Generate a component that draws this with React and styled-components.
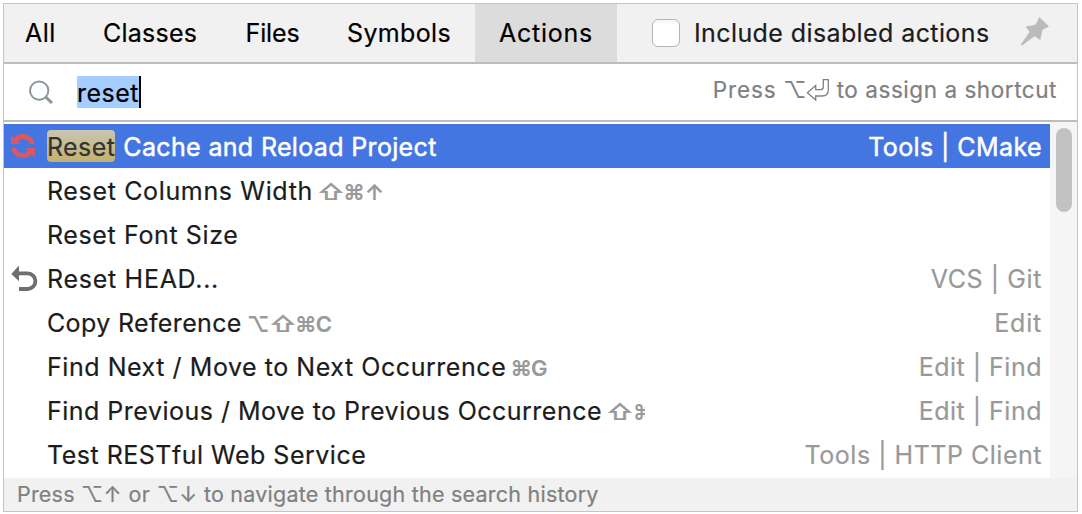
import React from "react";
import styled, { createGlobalStyle } from "styled-components";

const Global = createGlobalStyle`
  * { box-sizing: border-box; }
  body {
    margin: 0;
    background: #fff;
    font-family: "Inter", "Liberation Sans", sans-serif;
    font-size: 25px;
    color: #1c1c1c;
    -webkit-text-stroke-width: 0.2px;
  }
`;

const Popup = styled.div`
  width: 1075px;
  height: 509px;
  margin: 3px 0 0 3px;
  border: 1px solid #c4c4c4;
  display: flex;
  flex-direction: column;
  background: #fff;
  white-space: pre;
`;

const Text = styled.span`
  letter-spacing: ${(p) => p.$track || 0}px;
`;

const Header = styled.div`
  height: 60px;
  flex: none;
  display: flex;
  background: #f1f1f1;
  border-bottom: 2px solid #bdbdbd;
`;

const Tab = styled.div`
  width: ${(p) => p.$width}px;
  padding-left: ${(p) => p.$inset}px;
  line-height: 58px;
  color: #000;
  background: ${(p) => (p.$active ? "#dcdcdc" : "transparent")};
`;

const Option = styled.label`
  display: flex;
  align-items: center;
  margin-left: 35px;
  gap: 14px;
  line-height: 58px;
`;

const Checkbox = styled.span`
  width: 28px;
  height: 28px;
  border: 1px solid #b4b4b4;
  border-radius: 6px;
  background: linear-gradient(#f4f4f4, #fff 18%);
`;

const PinButton = styled.span`
  margin: 12px 0 0 30px;
  line-height: 0;
`;

const SearchBar = styled.div`
  height: 58px;
  flex: none;
  display: flex;
  align-items: center;
  padding: 0 20px 0 24px;
  border-bottom: 2px solid #bdbdbd;
  color: #000;
`;

const Query = styled.span`
  margin-left: 23px;
  height: 32px;
  line-height: 34px;
  width: 64px;
  background: #a5cdff;
  border-right: 2px solid #000;
`;

const Hint = styled.span`
  margin-left: auto;
  display: flex;
  align-items: center;
  padding-bottom: 5px;
  font-size: 22.5px;
  color: #808080;
`;

const Body = styled.div`
  flex: 1;
  display: flex;
  min-height: 0;
`;

const List = styled.div`
  flex: 1;
  padding-top: 2px;
`;

const Row = styled.div`
  height: 44px;
  display: flex;
  align-items: center;
  padding: 2px 8px 0 0;
  line-height: 42px;
  color: ${(p) => (p.$selected ? "#fff" : "inherit")};
  background: ${(p) => (p.$selected ? "#4476e1" : "transparent")};
  -webkit-text-stroke-width: ${(p) => (p.$selected ? 0.5 : 0.2)}px;
`;

const IconSlot = styled.span`
  width: 43px;
  padding: 0 0 2px 7px;
  line-height: 0;
`;

const Match = styled.mark`
  width: 68px;
  height: 32px;
  line-height: 35px;
  margin: 0 1px 2px 0;
  border-radius: 4px;
  color: #333;
  -webkit-text-stroke-width: 0.2px;
  background: linear-gradient(#c9c5b2, #c5b16c);
`;

const Path = styled.span`
  margin-left: auto;
  color: ${(p) => (p.$selected ? "#fff" : "#999")};
`;

const Shortcut = styled.span`
  display: flex;
  margin-left: 5px;
  padding-top: 1px;
  font-size: 22px;
  font-weight: 600;
  color: #999;
`;

const Key = styled.span`
  display: inline-flex;
  justify-content: ${(p) => (p.$clip ? "flex-start" : "center")};
  overflow: ${(p) => (p.$clip ? "hidden" : "visible")};
  width: ${(p) => p.$width}px;
  transform: scaleX(${(p) => p.$stretch || 1});
`;

const ScrollTrack = styled.div`
  width: 27px;
  padding: 6px 0 0 6px;
  background: #f5f5f5;
`;

const ScrollThumb = styled.div`
  width: 16px;
  height: 84px;
  border-radius: 8px;
  background: #c2c2c2;
`;

const Footer = styled.div`
  height: 33px;
  flex: none;
  display: flex;
  padding-left: 13px;
  line-height: 32px;
  font-size: 21.5px;
  color: #808080;
  background: #f1f1f1;
`;

const KEY_WIDTH = { "⌥": 23, "⇧": 26, "⌘": 20, "↑": 21, C: 16, G: 16 };

const PinIcon = () => (
  <svg width="30" height="30" viewBox="0 0 30 30" fill="#bbb">
    <path d="M19.4 1 29 10.6 22.5 13.7 20.3 24 14.5 20.2 2 29.6.8 28.4 9.5 16 5.7 10.4 15.5 8.8Z" />
  </svg>
);

const SearchIcon = () => (
  <svg width="26" height="26" viewBox="0 0 26 26" fill="none" stroke="#8b969d">
    <circle cx="11.2" cy="11.6" r="9.2" strokeWidth="2" />
    <path d="M17.6 17.8 24 24" strokeWidth="3" />
  </svg>
);

const ReturnIcon = () => (
  <svg width="24" height="24" viewBox="0 0 24 24" fill="none" stroke="#808080" strokeWidth="1.3">
    <path d="M17.3 1.7h5V12Q22.3 18 16 18H9.7v4L1.4 14.7 9.7 7.5v4.2h4.8q2.8 0 2.8-2.8Z" />
  </svg>
);

const ReloadIcon = () => (
  <svg width="24" height="24" viewBox="0 0 24 24" fill="#db5860">
    <path id="half" d="M0 .8 3 4A12 12 0 0 1 23.8 10H18.8A7.4 7.4 0 0 0 6.6 7L9.8 10H0Z" />
    <use href="#half" transform="rotate(180 12 12)" />
  </svg>
);

const RollbackIcon = () => (
  <svg width="27" height="27" viewBox="0 0 27 27">
    <path d="M8 .5V16.2L.3 8.9Z" fill="#6e6e6e" />
    <path d="M7 8.4H16.6a7.8 7.8 0 0 1 0 15.6H8" fill="none" stroke="#6e6e6e" strokeWidth="3.8" />
  </svg>
);

const tabs = [
  { name: "All", width: 77, inset: 21, track: 0.5 },
  { name: "Classes", width: 141, inset: 22, track: 0.25 },
  { name: "Files", width: 102, inset: 23.5, track: -0.1 },
  { name: "Symbols", width: 151, inset: 23, track: 0.35 },
  { name: "Actions", width: 142, inset: 24, track: 0.75, active: true },
];

const actions = [
  { match: "Reset", name: " Cache and Reload Project", track: 0.34, path: "Tools | CMake", pathTrack: 0.42, icon: <ReloadIcon />, selected: true },
  { name: "Reset Columns Width", track: 0.65, keys: ["⇧", "⌘", "↑"] },
  { name: "Reset Font Size", track: 0.62 },
  { name: "Reset HEAD...", track: 0.72, path: "VCS | Git", pathTrack: 0.6, icon: <RollbackIcon /> },
  { name: "Copy Reference", track: 0.36, path: "Edit", pathTrack: 0.8, keys: ["⌥", "⇧", "⌘", "C"] },
  { name: "Find Next / Move to Next Occurrence", track: 0.55, path: "Edit | Find", pathTrack: 0.5, keys: ["⌘", "G"] },
  { name: "Find Previous / Move to Previous Occurrence", track: 0.49, path: "Edit | Find", pathTrack: 0.5, keys: ["⇧", "⌘"], clipped: true },
  { name: "Test RESTful Web Service", track: 0.5, path: "Tools | HTTP Client", pathTrack: 0.52 },
];

function ActionRow({ action }) {
  const { keys = [], selected, clipped } = action;
  return (
    <Row $selected={selected}>
      <IconSlot>{action.icon}</IconSlot>
      {action.match && (
        <Match>
          <Text $track={0.4}>{action.match}</Text>
        </Match>
      )}
      <Text $track={action.track}>{action.name}</Text>
      {keys.length > 0 && (
        <Shortcut>
          {keys.map((k, i) => {
            const clip = clipped && i === keys.length - 1;
            return (
              <Key
                key={k}
                $width={clip ? 12 : KEY_WIDTH[k]}
                $clip={clip}
                $stretch={k === "⇧" ? 1.18 : 1}
              >
                {k}
              </Key>
            );
          })}
        </Shortcut>
      )}
      {action.path && (
        <Path $selected={selected}>
          <Text $track={action.pathTrack}>{action.path}</Text>
        </Path>
      )}
    </Row>
  );
}

export default function App() {
  return (
    <>
      <Global />
      <Popup>
        <Header>
          {tabs.map((t) => (
            <Tab key={t.name} $width={t.width} $inset={t.inset} $active={t.active}>
              <Text $track={t.track}>{t.name}</Text>
            </Tab>
          ))}
          <Option>
            <Checkbox />
            <Text $track={0.4}>Include disabled actions</Text>
          </Option>
          <PinButton>
            <PinIcon />
          </PinButton>
        </Header>
        <SearchBar>
          <SearchIcon />
          <Query>
            <Text $track={0.5}>reset</Text>
          </Query>
          <Hint>
            <Text $track={0.9}>Press </Text>
            <Key $width={22}>⌥</Key>
            <ReturnIcon />
            <Text $track={0.55}> to assign a shortcut</Text>
          </Hint>
        </SearchBar>
        <Body>
          <List>
            {actions.map((a) => (
              <ActionRow key={a.name} action={a} />
            ))}
          </List>
          <ScrollTrack>
            <ScrollThumb />
          </ScrollTrack>
        </Body>
        <Footer>
          <Text $track={0.2}>Press </Text>
          <Key $width={22}>⌥</Key>
          <Key $width={19}>↑</Key>
          <Text $track={0.4}> or </Text>
          <Key $width={22}>⌥</Key>
          <Key $width={19}>↓</Key>
          <Text $track={0.23}> to navigate through the search history</Text>
        </Footer>
      </Popup>
    </>
  );
}
